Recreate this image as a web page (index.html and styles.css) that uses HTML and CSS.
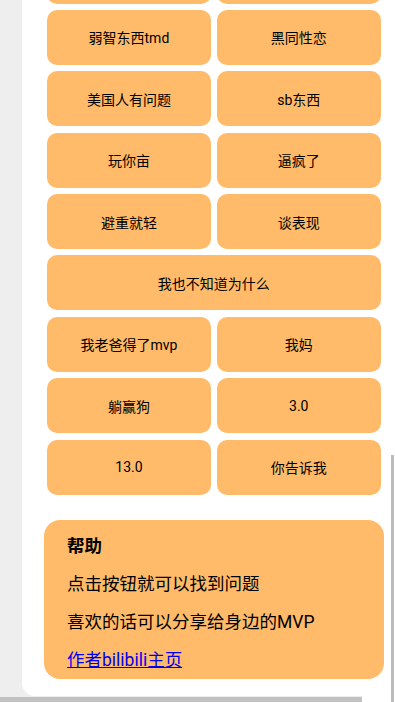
FILE: index.html
```html
<!DOCTYPE html>
<html lang="zh">
<head>
<meta charset="utf-8">
<title>问题按钮</title>
<link rel="stylesheet" href="styles.css">
</head>
<body>
<div class="viewport">
  <div class="panel">
    <div class="grid">
      <div class="btn"></div>
      <div class="btn"></div>
      <div class="btn">弱智东西tmd</div>
      <div class="btn">黑同性恋</div>
      <div class="btn">美国人有问题</div>
      <div class="btn">sb东西</div>
      <div class="btn">玩你亩</div>
      <div class="btn">逼疯了</div>
      <div class="btn">避重就轻</div>
      <div class="btn">谈表现</div>
      <div class="btn wide">我也不知道为什么</div>
      <div class="btn">我老爸得了mvp</div>
      <div class="btn">我妈</div>
      <div class="btn">躺赢狗</div>
      <div class="btn">3.0</div>
      <div class="btn">13.0</div>
      <div class="btn">你告诉我</div>
    </div>
    <div class="help">
      <div class="help-title">帮助</div>
      <div class="help-line">点击按钮就可以找到问题</div>
      <div class="help-line">喜欢的话可以分享给身边的MVP</div>
      <a class="help-link" href="#">作者bilibili主页</a>
    </div>
  </div>
  <div class="hcorner"></div>
  <div class="hbar"></div>
  <div class="vbar"></div>
</div>
</body>
</html>
```

FILE: styles.css
```css
html, body {
  margin: 0;
  padding: 0;
}
body {
  font-family: Roboto, "Noto Sans CJK SC", sans-serif;
  color: #000;
  background: #eeeeee;
}
.viewport {
  position: relative;
  width: 395px;
  height: 702px;
  overflow: hidden;
  background: #eeeeee;
}
.panel {
  margin-left: 22px;
  margin-top: -54.6px;
  width: 339.7px;
  padding: 0 22px 16.7px 22px;
  background: #ffffff;
  border-bottom-left-radius: 13px;
}
.grid {
  display: grid;
  grid-template-columns: 1fr 1fr;
}
.btn {
  margin: 3.2px;
  height: 55px;
  border-radius: 10px;
  background: #ffbb69;
  display: flex;
  align-items: center;
  justify-content: center;
  font-size: 14px;
  color: #000;
}
.btn.wide {
  grid-column: 1 / span 2;
}
.help {
  margin-top: 22px;
  background: #ffbb69;
  border-radius: 16px;
  padding: 15px 23px 8.3px 23px;
  display: flex;
  flex-direction: column;
  gap: 16px;
  font-size: 17.5px;
  line-height: 22px;
}
.help-title {
  font-weight: 700;
}
.help-link {
  color: #0000ee;
  text-decoration: underline;
  align-self: flex-start;
}
.hcorner {
  position: absolute;
  right: 0;
  bottom: 0;
  width: 33px;
  height: 6px;
  background: #ffffff;
}
.hbar {
  position: absolute;
  left: 0;
  bottom: 0;
  width: 362px;
  height: 5px;
  background: #c1c1c1;
}
.vbar {
  position: absolute;
  left: 390.6px;
  top: 455px;
  bottom: 0;
  width: 3.4px;
  background: #bcbcbc;
}
```
